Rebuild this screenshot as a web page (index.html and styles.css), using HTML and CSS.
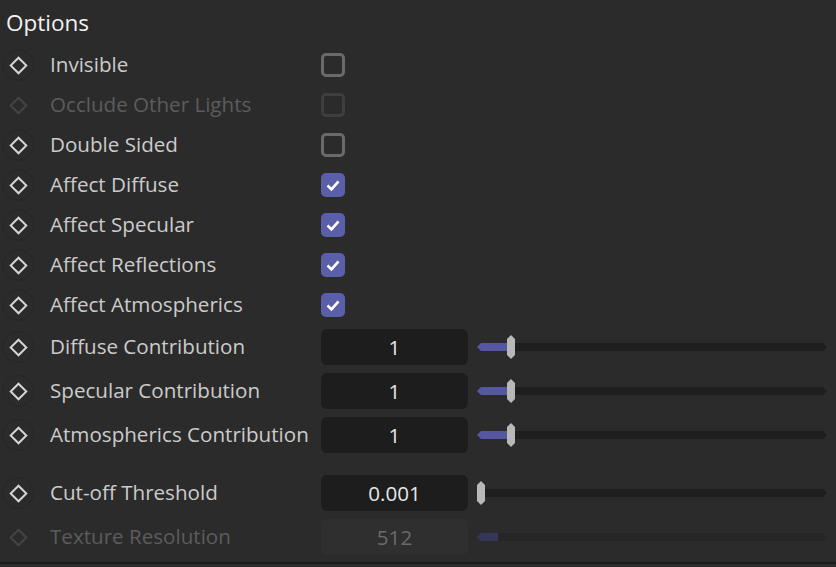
FILE: index.html
```html
<!DOCTYPE html>
<html lang="en">
<head>
    <meta charset="UTF-8">
    <title>Options</title>
    <link rel="stylesheet" href="styles.css">
</head>
<body>

    <div class="panel">
        <h2 class="title">Options</h2>

        <div class="row">
            <span class="key"><i class="diamond"></i></span>
            <span class="label">Invisible</span>
            <span class="box"></span>
        </div>
        <div class="row off">
            <span class="key"><i class="diamond"></i></span>
            <span class="label">Occlude Other Lights</span>
            <span class="box"></span>
        </div>
        <div class="row">
            <span class="key"><i class="diamond"></i></span>
            <span class="label">Double Sided</span>
            <span class="box"></span>
        </div>
        <div class="row">
            <span class="key"><i class="diamond"></i></span>
            <span class="label">Affect Diffuse</span>
            <span class="box checked"><svg viewBox="0 0 24 24"><path d="M6.5 12.5l4 3.8 7-8"/></svg></span>
        </div>
        <div class="row">
            <span class="key"><i class="diamond"></i></span>
            <span class="label">Affect Specular</span>
            <span class="box checked"><svg viewBox="0 0 24 24"><path d="M6.5 12.5l4 3.8 7-8"/></svg></span>
        </div>
        <div class="row">
            <span class="key"><i class="diamond"></i></span>
            <span class="label">Affect Reflections</span>
            <span class="box checked"><svg viewBox="0 0 24 24"><path d="M6.5 12.5l4 3.8 7-8"/></svg></span>
        </div>
        <div class="row">
            <span class="key"><i class="diamond"></i></span>
            <span class="label">Affect Atmospherics</span>
            <span class="box checked"><svg viewBox="0 0 24 24"><path d="M6.5 12.5l4 3.8 7-8"/></svg></span>
        </div>

        <div class="row tall">
            <span class="key"><i class="diamond"></i></span>
            <span class="label">Diffuse Contribution</span>
            <span class="field">1</span>
            <div class="slider">
                <div class="fill" style="width: 30px"></div>
                <div class="handle"></div>
                <div class="track"></div>
            </div>
        </div>
        <div class="row tall">
            <span class="key"><i class="diamond"></i></span>
            <span class="label">Specular Contribution</span>
            <span class="field">1</span>
            <div class="slider">
                <div class="fill" style="width: 30px"></div>
                <div class="handle"></div>
                <div class="track"></div>
            </div>
        </div>
        <div class="row tall">
            <span class="key"><i class="diamond"></i></span>
            <span class="label">Atmospherics Contribution</span>
            <span class="field">1</span>
            <div class="slider">
                <div class="fill" style="width: 30px"></div>
                <div class="handle"></div>
                <div class="track"></div>
            </div>
        </div>

        <div class="row tall spaced">
            <span class="key"><i class="diamond"></i></span>
            <span class="label">Cut-off Threshold</span>
            <span class="field">0.001</span>
            <div class="slider">
                <div class="handle"></div>
                <div class="track"></div>
            </div>
        </div>
        <div class="row tall off">
            <span class="key"><i class="diamond"></i></span>
            <span class="label">Texture Resolution</span>
            <span class="field">512</span>
            <div class="slider">
                <div class="fill" style="width: 21px"></div>
                <div class="track"></div>
            </div>
        </div>
    </div>

</body>
</html>
```

FILE: styles.css
```css
body {
    margin: 0;
    background-color: #2b2b2b;
    font-family: "Open Sans", "Noto Sans", sans-serif;
    color: #cbcbcb;
}

.panel {
    border-bottom: 2px solid #1c1c1c;
    padding-bottom: 3px;
}

.title {
    margin: 0;
    height: 45px;
    padding-left: 6px;
    font-size: 22.5px;
    font-weight: normal;
    line-height: 46px;
    color: #f2f2f2;
}

.row {
    display: grid;
    grid-template-columns: 50px 271px 147px 1fr;
    align-items: center;
    height: 40px;
    font-size: 20.6px;
    line-height: 28px;
}

.row.tall {
    height: 44px;
}

.row.spaced {
    margin-top: 14px;
}

.key {
    display: flex;
    align-items: center;
    justify-content: center;
    width: 32px;
    height: 32px;
    margin-left: 2px;
    border: 1px solid #262626;
    border-radius: 50%;
    box-sizing: border-box;
}

.diamond {
    width: 9px;
    height: 9px;
    border: 2px solid #d4d4d4;
    transform: rotate(45deg);
}

.label {
    white-space: nowrap;
    margin-top: -2px;
}

.box {
    width: 24px;
    height: 24px;
    box-sizing: border-box;
    border: 3px solid #6a6a6a;
    border-radius: 5px;
}

.box.checked {
    border: none;
    background-color: #5b5ea8;
}

.box svg {
    display: block;
    width: 24px;
    height: 24px;
    fill: none;
    stroke: #ffffff;
    stroke-width: 2.6;
}

.field {
    height: 36px;
    line-height: 36px;
    border-radius: 6px;
    background-color: #1d1d1d;
    text-align: center;
    color: #e6e6e6;
}

.slider {
    display: flex;
    align-items: center;
    height: 24px;
    margin: 0 9px;
}

.fill {
    height: 8px;
    background-color: #5558a0;
    clip-path: polygon(4px 0, 100% 0, 100% 100%, 4px 100%, 0 50%);
}

.handle {
    flex: none;
    width: 8px;
    height: 24px;
    background-color: #b8b8b8;
    clip-path: polygon(50% 0, 100% 4px, 100% 20px, 50% 100%, 0 20px, 0 4px);
}

.track {
    flex: 1;
    height: 8px;
    background-color: #1e1e1e;
    clip-path: polygon(0 0, calc(100% - 4px) 0, 100% 50%, calc(100% - 4px) 100%, 0 100%);
}

.row.off {
    color: #5c5c5c;
}

.row.off .key {
    border-color: transparent;
}

.row.off .diamond {
    border-color: #444444;
}

.row.off .box {
    border-color: #3e3e3e;
}

.row.off .field {
    background-color: #2f2f2f;
    color: #6a6a6a;
}

.row.off .fill {
    background-color: #34365a;
}

.row.off .track {
    background-color: #262626;
}
```
